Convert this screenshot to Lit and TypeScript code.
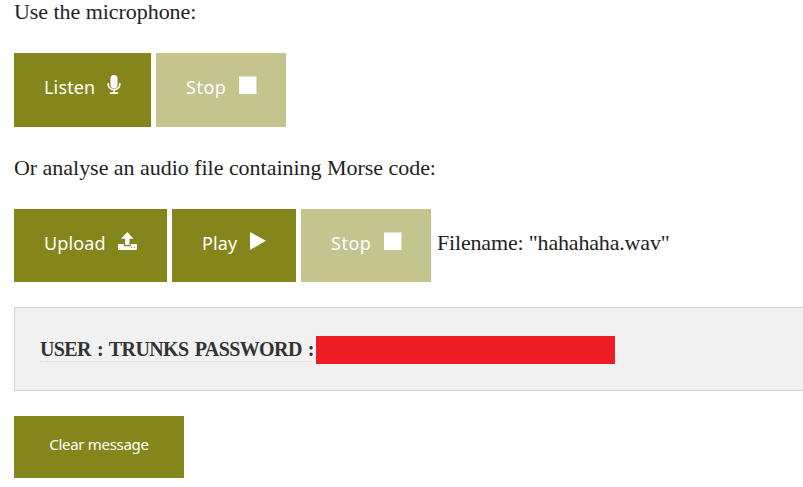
import { LitElement, html, css, svg } from "lit";
import { customElement, property } from "lit/decorators.js";

const icons = {
  mic: { w: 14, h: 19, body: svg`<rect x="3.5" y="0" width="7" height="13.2" rx="3.5" fill="#fff"/><path d="M1.2 8v1.6a5.8 5 0 0 0 11.6 0V8M7 14.6v3.4M2.8 18.1h8.4" fill="none" stroke="#fff" stroke-width="1.6"/>` },
  stop: { w: 18, h: 18, body: svg`<path d="M0 .5h17.5V18H0z" fill="#fff"/>` },
  upload: { w: 19, h: 18, body: svg`<path fill-rule="evenodd" d="M9.3 0 15.5 6.8H11.5V13H7.1V6.8H3zM1 12H5.8V14.2H12.8V12H18Q19 12 19 13V17Q19 18 18 18H1Q0 18 0 17V13Q0 12 1 12zM13 15v1h1v-1zM16 15v1h1v-1z" fill="#fff"/>` },
  play: { w: 16, h: 18, body: svg`<path d="M0 0 16 8.8 0 18z" fill="#fff"/>` },
};

@customElement("tool-button")
export class ToolButton extends LitElement {
  @property() icon: keyof typeof icons = "stop";
  @property() label = "";
  @property({ type: Boolean }) disabled = false;

  static styles = css`
    :host { display: block; }
    button {
      box-sizing: border-box; width: 100%; height: 100%; border: 0; margin: 0;
      padding: 0 30px; background: #84861b; color: #fff;
      display: flex; align-items: flex-start; justify-content: space-between;
      font: 18px/26px "Noto Sans", sans-serif; white-space: nowrap;
    }
    button:disabled { background: #c4c48f; padding-right: 29px; }
    .label { margin-top: 21px; letter-spacing: .15px; }
    button:disabled .label { letter-spacing: .5px; }
    .icon { display: block; flex: none; margin-top: 23px; }
    .mic { margin-top: 22px; }
  `;

  render() {
    const i = icons[this.icon];
    return html`<button ?disabled=${this.disabled}>
      <span class="label">${this.label}</span>
      <svg class="icon ${this.icon}" width=${i.w} height=${i.h} viewBox="0 0 ${i.w} ${i.h}">${i.body}</svg>
    </button>`;
  }
}

@customElement("app-root")
export class AppRoot extends LitElement {
  static styles = css`
    :host {
      display: block; height: 487px; overflow: hidden; background: #fff; color: #222;
      font: 22px/32px "Liberation Serif", serif;
    }
    .page { padding-left: 14px; display: flex; flex-direction: column; align-items: flex-start; }
    .line { margin: 0; height: 32px; white-space: nowrap; }
    .first { margin-top: -4px; letter-spacing: -.05px; }
    .second { margin-top: 25px; letter-spacing: -.03px; }
    .row { display: flex; gap: 5px; height: 74px; margin-top: 25px; }
    .files { height: 73px; }
    .listen { width: 137px; }
    .stop { width: 130px; }
    .upload { width: 153px; }
    .play { width: 124px; }
    .name { margin: 18px 0 0 1px; white-space: nowrap; letter-spacing: -.17px; }
    .message {
      box-sizing: border-box; align-self: stretch; height: 84px; margin-top: 25px;
      border: 1px solid #d5d5d5; border-right: 0; background: #f1f1f1; color: #333;
      padding: 28px 0 0 25px; display: flex; align-items: flex-start;
    }
    .text {
      box-sizing: border-box; width: 276px; height: 26px; line-height: 27px;
      border-bottom: 1px dotted #d8d8d8; font-weight: 700; font-size: 20px; white-space: nowrap;
      letter-spacing: -.6px; word-spacing: 1.7px;
    }
    .redacted { width: 299px; height: 28px; background: #ee1c25; }
    .clear {
      width: 170px; height: 62px; margin: 25px 0 0; padding: 0 0 6px; border: 0;
      background: #84861b; color: #fff; font: 15px/24px "Noto Sans", sans-serif; white-space: nowrap;
      letter-spacing: -.3px;
    }
  `;

  render() {
    return html`<main class="page">
      <p class="line first"><span>Use the microphone:</span></p>
      <div class="row">
        <tool-button class="listen" label="Listen" icon="mic"></tool-button>
        <tool-button class="stop" label="Stop" icon="stop" disabled></tool-button>
      </div>
      <p class="line second"><span>Or analyse an audio file containing Morse code:</span></p>
      <div class="row files">
        <tool-button class="upload" label="Upload" icon="upload"></tool-button>
        <tool-button class="play" label="Play" icon="play"></tool-button>
        <tool-button class="stop" label="Stop" icon="stop" disabled></tool-button>
        <span class="name">Filename: "hahahaha.wav"</span>
      </div>
      <div class="message">
        <span class="text">USER : TRUNKS PASSWORD :</span>
        <span class="redacted"></span>
      </div>
      <button class="clear">Clear message</button>
    </main>`;
  }
}
